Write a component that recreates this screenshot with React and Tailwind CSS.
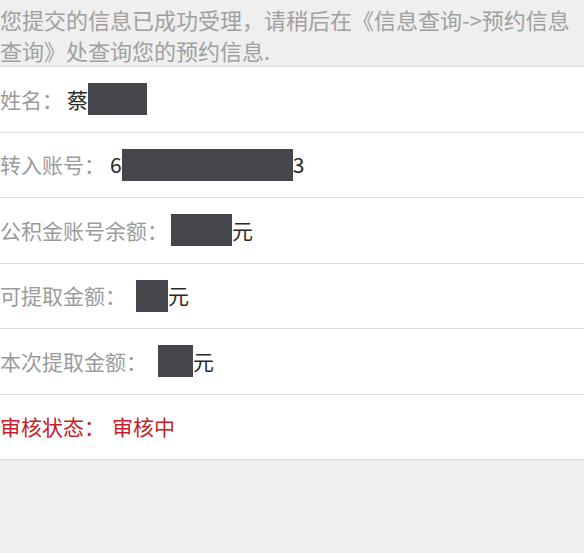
import React from "react";

const Box = ({ w }) => (
  <span className="inline-block h-[32px] bg-[#44464c]" style={{ width: w }} />
);

function Row({ label, children }) {
  return (
    <div className="flex h-[65.5px] items-center border-b border-[#dcdcdc] bg-white text-[21px]">
      <span className="text-[#9b9b9b]">{label}</span>
      <span className="flex items-center text-[#2a2a2a]">{children}</span>
    </div>
  );
}

export default function App() {
  return (
    <div
      className="h-[553px] w-[584px] overflow-hidden bg-[#efefef]"
      style={{ fontFamily: '"Noto Sans CJK SC", "Noto Sans", sans-serif' }}
    >
      <div className="border-b border-[#dcdcdc] pt-[4px] text-[22px] leading-[31px] text-[#a0a0a0] whitespace-nowrap">
        您提交的信息已成功受理，请稍后在《信息查询-&gt;预约信息
        <br />
        查询》处查询您的预约信息.
      </div>
      <Row label="姓名：">
        <span className="ml-[4px]">蔡</span>
        <Box w={59} />
      </Row>
      <Row label="转入账号：">
        <span className="ml-[5px]">6</span>
        <Box w={171} />
        <span>3</span>
      </Row>
      <Row label="公积金账号余额：">
        <span className="ml-[3px]" />
        <Box w={61} />
        <span>元</span>
      </Row>
      <Row label="可提取金额：">
        <span className="ml-[10px]" />
        <Box w={32} />
        <span>元</span>
      </Row>
      <Row label="本次提取金额：">
        <span className="ml-[11px]" />
        <Box w={35} />
        <span>元</span>
      </Row>
      <div className="flex h-[65.5px] items-center border-b border-[#dcdcdc] bg-white text-[21px] text-[#c41e28]">
        <span>审核状态：</span>
        <span className="ml-[7px]">审核中</span>
      </div>
    </div>
  );
}
